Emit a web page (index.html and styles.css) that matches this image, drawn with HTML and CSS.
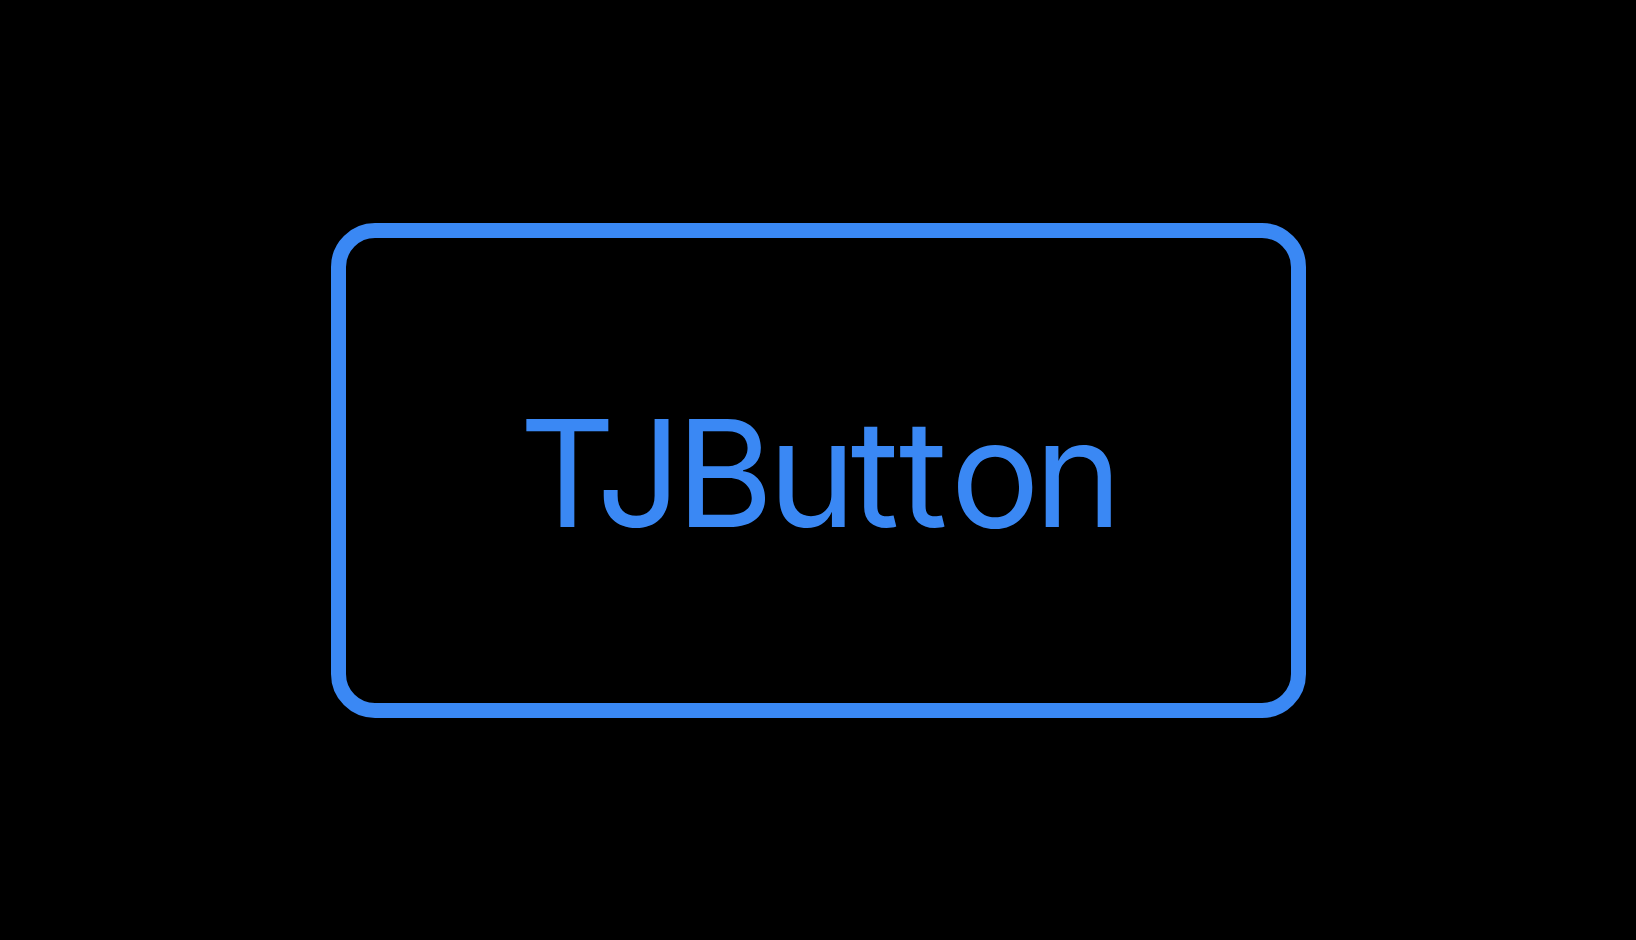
FILE: index.html
```html
<!doctype html>
<html lang="en">
<head>
    <meta charset="UTF-8">
    <meta name="viewport" content="width=device-width, initial-scale=1.0">
    <title>TJButton</title>
    <link rel="stylesheet" href="styles.css">
</head>
<body>
    <div class="stage">
        <button class="tj-button" type="button">TJBu<span class="loose">tt</span>on</button>
    </div>
</body>
</html>
```

FILE: styles.css
```css
* {
    margin: 0;
    padding: 0;
    box-sizing: border-box;
}

body {
    background: #000;
    height: 100vh;
    overflow: hidden;
}

.stage {
    height: 100%;
    display: flex;
    justify-content: center;
    align-items: center;
}

.tj-button {
    width: 975px;
    height: 495px;
    padding-top: 5px;
    border: 15px solid #3a88f4;
    border-radius: 44px;
    background: transparent;
    color: #3a88f4;
    font-family: Inter, "Noto Sans", sans-serif;
    font-size: 149px;
    font-weight: 400;
    letter-spacing: -5.5px;
    cursor: pointer;
}

/* keep the crossbars of the double t apart */
.tj-button .loose {
    letter-spacing: 3px;
}
```
